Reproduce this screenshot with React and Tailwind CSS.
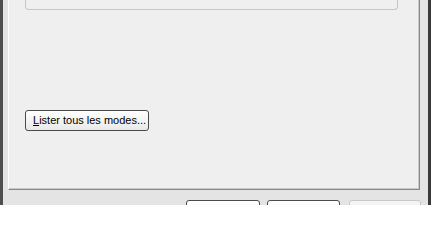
import React from "react"

const font = { fontFamily: "Tahoma, 'Liberation Sans', Arial, sans-serif" }

// bottom dialog buttons: only their top edge is in view, labels fall outside
const DialogButton = ({ label, disabled = false, className = "" }) => (
  <button
    aria-label={label}
    disabled={disabled}
    className={`h-[23px] shrink-0 rounded-[3px] border ${
      disabled
        ? "border-[#c9c9c9] bg-[#f4f4f4]"
        : "border-[#4a4a4a] bg-gradient-to-b from-white to-[#ececec]"
    } ${className}`}
  />
)

const App = () => {
  return (
    <div className="flex h-[205px] w-[431px] overflow-hidden bg-[#e4e4e4]" style={font}>
      {/* left window frame */}
      <div className="w-[3px] shrink-0 bg-[#4e4e4e]" />

      <div className="flex min-h-0 flex-1 flex-col overflow-hidden pl-[5px] pr-[8px]">
        {/* tab page */}
        <div className="flex h-[190px] shrink-0 flex-col border-b border-l border-r border-b-[#8a8a8a] border-l-white border-r-[#8a8a8a] bg-[#efefef] shadow-[inset_-1px_-1px_0_#c8c8c8]">
          {/* group box (top cut off) */}
          <div className="ml-[16px] mr-[21px] h-[10px] rounded-b-[4px] border-b border-l border-r border-[#c4c4c4]" />

          <div className="ml-[16px] mt-[100px]">
            <button className="flex h-[21px] w-[124px] items-center rounded-[3px] border border-[#4a4a4a] bg-gradient-to-b from-white to-[#e9e9e9] pl-[7px] text-[11px] text-black">
              <span>
                <span className="underline">L</span>ister tous les modes...
              </span>
            </button>
          </div>
        </div>

        {/* dialog buttons */}
        <div className="mt-[10px] flex shrink-0 pl-[178px]">
          <DialogButton label="OK" className="w-[74px]" />
          <DialogButton label="Annuler" className="ml-[7px] w-[73px]" />
          <DialogButton label="Appliquer" disabled className="ml-[9px] w-[72px]" />
        </div>
      </div>

      {/* right window frame */}
      <div className="w-[3px] shrink-0 bg-[#3a3a3a]" />
    </div>
  )
}

export default App
